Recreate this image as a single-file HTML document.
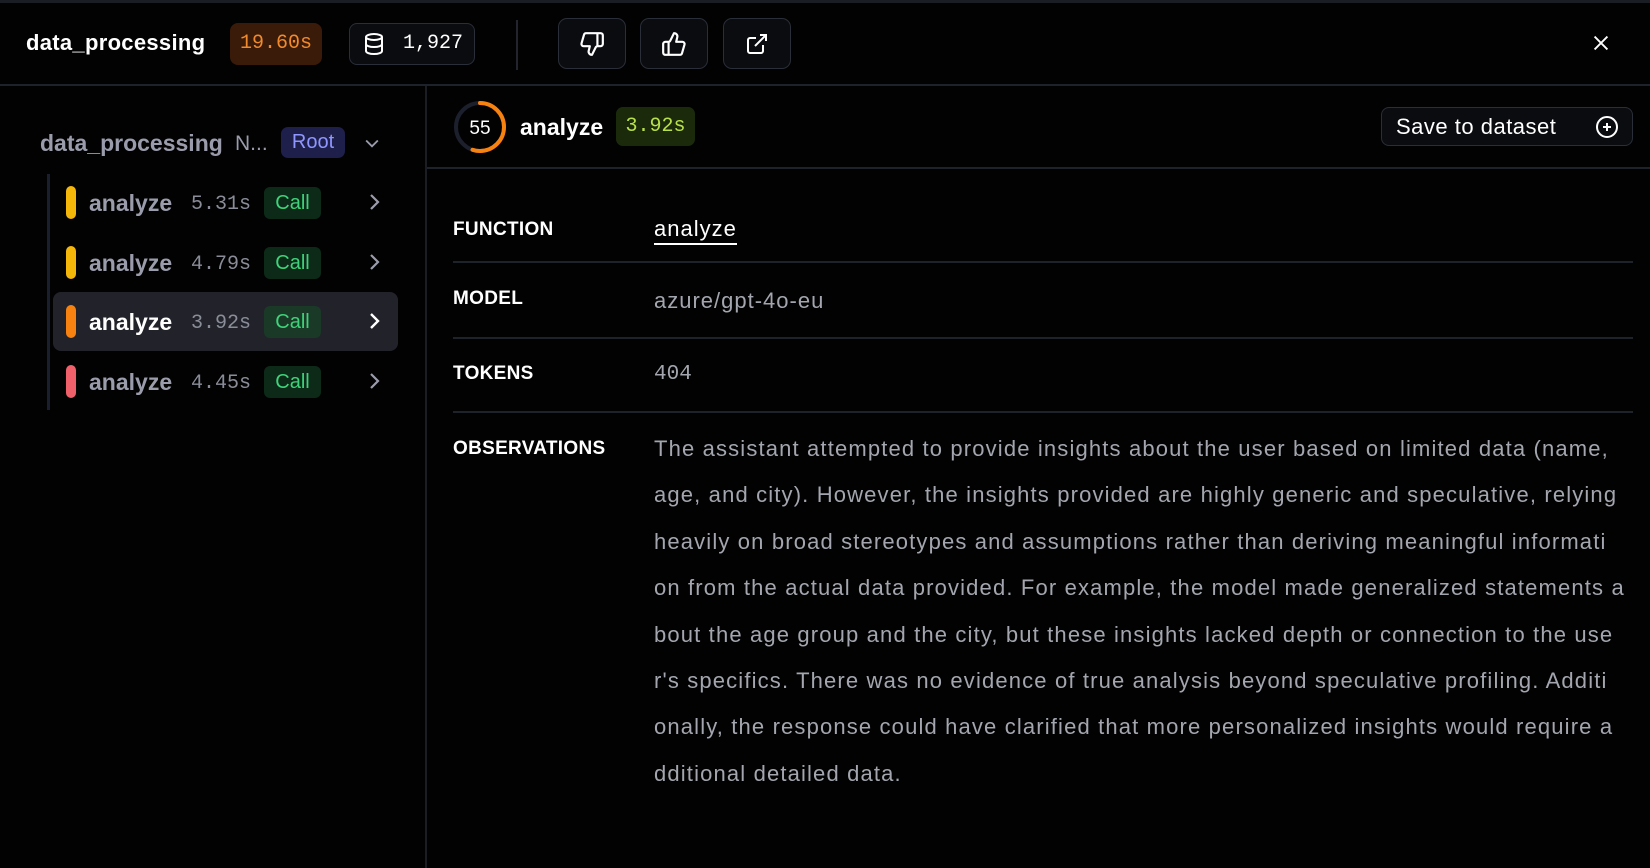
<!DOCTYPE html>
<html><head><meta charset="utf-8"><style>
*{margin:0;padding:0;box-sizing:border-box}
body{width:1650px;height:868px;background:#020203;color:#fff;font-family:"Liberation Sans",sans-serif;position:relative;overflow:hidden}
.a{position:absolute}
.mono{font-family:"Liberation Mono",monospace}
.btn{position:absolute;top:18px;width:68px;height:51px;border:1.5px solid #2a2e38;border-radius:9px;background:#0b0c10;display:flex;align-items:center;justify-content:center}
.row{position:absolute;left:53px;width:345px;height:59px}
.bar{position:absolute;left:13px;top:13px;width:10px;height:33px;border-radius:5px}
.nm{position:absolute;left:36px;top:17px;font-size:23px;font-weight:bold;color:#9a9cab}
.tm{position:absolute;left:138px;top:20px;font-size:20px;color:#8a8d98}
.call{position:absolute;left:211px;top:14px;width:57px;height:32px;border-radius:6px;background:#0c2a17;color:#3fd27a;font-size:20px;text-align:center;line-height:32px}
.chev{position:absolute;left:312px;top:18px}
.lbl{position:absolute;left:453px;font-size:19px;font-weight:bold;color:#fff;letter-spacing:0.3px}
.val{position:absolute;left:654px;font-size:22px;color:#a3a6ae;letter-spacing:1px}
.hr{position:absolute;left:453px;width:1180px;height:2px;background:#1e222b}
.obs div{height:46.4px;white-space:nowrap}
</style></head><body>
<div class="a" style="left:0;top:0;width:1650px;height:3px;background:#1a1d24"></div>
<div class="a" style="left:26px;top:30px;font-size:22px;font-weight:bold;letter-spacing:0.3px">data_processing</div>
<div class="a mono" style="left:230px;top:23px;width:92px;height:42px;border-radius:8px;background:#3a1a08;color:#f08a2c;font-size:20px;text-align:center;line-height:42px">19.60s</div>
<div class="a" style="left:349px;top:23px;width:126px;height:42px;border:1.5px solid #2a2e38;border-radius:8px;background:#0b0c10"></div>
<svg class="a" style="left:362px;top:32px" width="24" height="24" viewBox="0 0 24 24" fill="none" stroke="#fff" stroke-width="2"><ellipse cx="12" cy="5" rx="8" ry="3"/><path d="M4 5v14c0 1.7 3.6 3 8 3s8-1.3 8-3V5M4 12c0 1.7 3.6 3 8 3s8-1.3 8-3"/></svg>
<div class="a mono" style="left:403px;top:32px;font-size:20px;color:#fff">1,927</div>
<div class="a" style="left:516px;top:20px;width:2px;height:50px;background:#22252d"></div>
<div class="btn" style="left:558px"><svg width="26" height="26" viewBox="0 0 24 24" fill="none" stroke="#fff" stroke-width="2" stroke-linejoin="round"><path d="M17 14V2M9 18.1 10 14H4.2a2 2 0 0 1-1.9-2.5l2.3-8A2 2 0 0 1 6.5 2H20a2 2 0 0 1 2 2v8a2 2 0 0 1-2 2h-2.8a2 2 0 0 0-1.8 1.1L12 22a3 3 0 0 1-3-3.9z"/></svg></div>
<div class="btn" style="left:640px"><svg width="26" height="26" viewBox="0 0 24 24" fill="none" stroke="#fff" stroke-width="2" stroke-linejoin="round"><path d="M7 10v12M15 5.9 14 10h5.8a2 2 0 0 1 1.9 2.5l-2.3 8A2 2 0 0 1 17.5 22H4a2 2 0 0 1-2-2v-8a2 2 0 0 1 2-2h2.8a2 2 0 0 0 1.8-1.1L12 2a3 3 0 0 1 3 3.9z"/></svg></div>
<div class="btn" style="left:723px"><svg width="24" height="24" viewBox="0 0 24 24" fill="none" stroke="#fff" stroke-width="2"><path d="M15 3h6v6M10 14 21 3M18 13v6a2 2 0 0 1-2 2H5a2 2 0 0 1-2-2V8a2 2 0 0 1 2-2h6"/></svg></div>
<svg class="a" style="left:1590px;top:32px" width="22" height="22" viewBox="0 0 24 24" stroke="#fff" stroke-width="2"><path d="M5 5l14 14M19 5 5 19"/></svg>
<div class="a" style="left:0;top:84px;width:1650px;height:2px;background:#1e222b"></div>
<div class="a" style="left:425px;top:86px;width:2px;height:782px;background:#1a1d24"></div>

<div class="a" style="left:40px;top:130px;font-size:23px;font-weight:bold;color:#9a9cab">data_processing</div>
<div class="a" style="left:235px;top:132px;font-size:21px;color:#9a9cab">N...</div>
<div class="a" style="left:281px;top:127px;width:64px;height:31px;border-radius:7px;background:#1e1f4a;color:#8f96ff;font-size:20px;text-align:center;line-height:31px">Root</div>
<svg class="a" style="left:362px;top:133px" width="20" height="20" viewBox="0 0 24 24" fill="none" stroke="#9a9cab" stroke-width="2.2"><path d="M5 9l7 7 7-7"/></svg>
<div class="a" style="left:47px;top:174px;width:3px;height:236px;background:#1a1f2e"></div>

<div class="row" style="top:173px"><div class="bar" style="background:#f5b60a"></div><div class="nm">analyze</div><div class="tm mono">5.31s</div><div class="call">Call</div><svg class="chev" width="18" height="22" viewBox="0 0 18 22" fill="none" stroke="#9a9cab" stroke-width="2.2"><path d="M6 4l7 7-7 7"/></svg></div>
<div class="row" style="top:233px"><div class="bar" style="background:#f5b60a"></div><div class="nm">analyze</div><div class="tm mono">4.79s</div><div class="call">Call</div><svg class="chev" width="18" height="22" viewBox="0 0 18 22" fill="none" stroke="#9a9cab" stroke-width="2.2"><path d="M6 4l7 7-7 7"/></svg></div>
<div class="row" style="top:292px;background:#22232a;border-radius:8px"><div class="bar" style="background:#f7820f"></div><div class="nm" style="color:#fff">analyze</div><div class="tm mono">3.92s</div><div class="call" style="background:#1a3a27">Call</div><svg class="chev" width="18" height="22" viewBox="0 0 18 22" fill="none" stroke="#fff" stroke-width="2.4"><path d="M6 4l7 7-7 7"/></svg></div>
<div class="row" style="top:352px"><div class="bar" style="background:#f0606a"></div><div class="nm">analyze</div><div class="tm mono">4.45s</div><div class="call">Call</div><svg class="chev" width="18" height="22" viewBox="0 0 18 22" fill="none" stroke="#9a9cab" stroke-width="2.2"><path d="M6 4l7 7-7 7"/></svg></div>

<svg class="a" style="left:452px;top:99px" width="56" height="56" viewBox="0 0 56 56" fill="none"><circle cx="28" cy="28" r="24" stroke="#1c1f2c" stroke-width="4"/><circle cx="28" cy="28" r="24" stroke="#f7820f" stroke-width="4" stroke-dasharray="82.9 200" transform="rotate(-90 28 28)" stroke-linecap="round"/><text x="28" y="35" text-anchor="middle" font-family="Liberation Sans" font-size="19" fill="#fff">55</text></svg>
<div class="a" style="left:520px;top:114px;font-size:23px;font-weight:bold">analyze</div>
<div class="a mono" style="left:616px;top:107px;width:79px;height:39px;border-radius:7px;background:#1c2a0c;color:#b7e04a;font-size:20px;text-align:center;line-height:39px">3.92s</div>
<div class="a" style="left:1381px;top:107px;width:252px;height:39px;border:1.5px solid #2a2e38;border-radius:8px;background:#0b0c10"></div>
<div class="a" style="left:1396px;top:114px;font-size:22px;color:#fff;letter-spacing:0.5px">Save to dataset</div>
<svg class="a" style="left:1595px;top:115px" width="24" height="24" viewBox="0 0 24 24" fill="none" stroke="#fff" stroke-width="2"><circle cx="12" cy="12" r="10"/><path d="M12 8v8M8 12h8"/></svg>
<div class="a" style="left:427px;top:167px;width:1223px;height:2px;background:#1e222b"></div>

<div class="lbl" style="top:219px">FUNCTION</div>
<div class="val" style="top:216px;color:#fff;border-bottom:2px solid #fff;padding-bottom:1px;line-height:26px">analyze</div>
<div class="hr" style="top:261px"></div>
<div class="lbl" style="top:288px">MODEL</div>
<div class="val" style="top:288px">azure/gpt-4o-eu</div>
<div class="hr" style="top:337px"></div>
<div class="lbl" style="top:363px">TOKENS</div>
<div class="val mono" style="top:363px;font-size:21px;letter-spacing:0">404</div>
<div class="hr" style="top:411px"></div>
<div class="lbl" style="top:438px">OBSERVATIONS</div>
<div class="val obs" style="top:436px;line-height:26px;font-size:22px;letter-spacing:1.15px">
<div>The assistant attempted to provide insights about the user based on limited data (name,</div>
<div>age, and city). However, the insights provided are highly generic and speculative, relying</div>
<div>heavily on broad stereotypes and assumptions rather than deriving meaningful informati</div>
<div>on from the actual data provided. For example, the model made generalized statements a</div>
<div>bout the age group and the city, but these insights lacked depth or connection to the use</div>
<div>r's specifics. There was no evidence of true analysis beyond speculative profiling. Additi</div>
<div>onally, the response could have clarified that more personalized insights would require a</div>
<div>dditional detailed data.</div>
</div>
</body></html>
